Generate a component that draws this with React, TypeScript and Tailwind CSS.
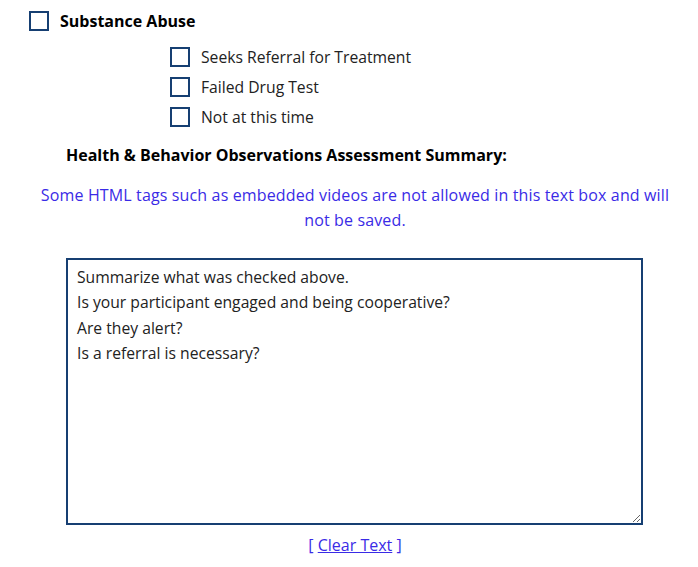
import { useState } from "react";

const defaultSummary = `Summarize what was checked above.
Is your participant engaged and being cooperative?
Are they alert?
Is a referral is necessary?`;

function Box({ checked, onToggle }: { checked: boolean; onToggle: () => void }) {
  return (
    <button
      type="button"
      onClick={onToggle}
      className="w-[20px] h-[20px] shrink-0 border-2 border-[#163f72] bg-white grid place-items-center"
    >
      {checked ? <span className="w-[10px] h-[10px] bg-[#163f72]" /> : null}
    </button>
  );
}

export default function App() {
  const [checks, setChecks] = useState<Record<string, boolean>>({});
  const [summary, setSummary] = useState(defaultSummary);
  const toggle = (k: string) => setChecks((c) => ({ ...c, [k]: !c[k] }));
  const options = ["Seeks Referral for Treatment", "Failed Drug Test", "Not at this time"];

  return (
    <div className="w-[698px] h-[567px] bg-white text-black font-['Open_Sans',sans-serif] overflow-hidden">
      <div className="flex items-center gap-[11px] pl-[29px] pt-[11px]">
        <Box checked={!!checks.main} onToggle={() => toggle("main")} />
        <span className="text-[16px] font-bold leading-[20px]">Substance Abuse</span>
      </div>
      <div className="flex flex-col gap-[10px] pl-[170px] pt-[16px]">
        {options.map((o) => (
          <label key={o} className="flex items-center gap-[11px]">
            <Box checked={!!checks[o]} onToggle={() => toggle(o)} />
            <span className="text-[15.7px] leading-[20px] text-[#222]">{o}</span>
          </label>
        ))}
      </div>
      <h3 className="pl-[66px] pt-[18px] text-[16px] font-bold leading-[20px]">
        Health &amp; Behavior Observations Assessment Summary:
      </h3>
      <div className="pl-[12px]">
        <p className="mx-auto w-[640px] pt-[18px] text-center text-[16px] leading-[25px] tracking-[0.14px] text-[#3a2be6]">
          Some HTML tags such as embedded videos are not allowed in this text box and will not be saved.
        </p>
      </div>
      <div className="pl-[66px] pt-[25px]">
        <textarea
          value={summary}
          onChange={(e) => setSummary(e.target.value)}
          className="block w-[577px] h-[267px] border-2 border-[#163f72] px-[9px] pt-[5px] text-[15.7px] leading-[25.3px] text-[#222] outline-none resize"
        />
      </div>
      <div className="pl-[12px] text-center pt-[9px] text-[16px] leading-[22px] text-[#3a2be6]">
        [{" "}
        <button type="button" onClick={() => setSummary("")} className="underline">
          Clear Text
        </button>{" "}
        ]
      </div>
    </div>
  );
}
